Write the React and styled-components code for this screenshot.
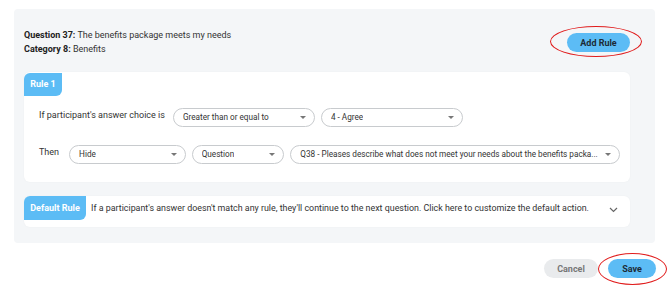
import React from 'react'
import styled, { createGlobalStyle } from 'styled-components'

const GlobalStyle = createGlobalStyle`
  body {
    margin: 0;
    background: #ffffff;
    font-family: Roboto, "Liberation Sans", sans-serif;
    color: #333;
  }
`

const Page = styled.div`
  width: 670px;
  height: 286px;
  padding-top: 9px;
  box-sizing: border-box;
  overflow: hidden;
`

const Panel = styled.section`
  margin-left: 14px;
  width: 641px;
  height: 234px;
  box-sizing: border-box;
  background: #f4f6f8;
  border-radius: 4px;
  padding: 19px 25px 0 10px;
`

const Header = styled.div`
  display: flex;
  justify-content: space-between;
  align-items: flex-start;
  height: 28px;
`

const QuestionInfo = styled.div`
  font-size: 9px;
  line-height: 14px;
  color: #333;
  b {
    font-weight: 700;
    color: #222;
  }
`

const Circled = styled.div`
  position: relative;
  display: inline-flex;
  margin-top: ${p => p.$mt || 0}px;
  &::after {
    content: '';
    position: absolute;
    left: ${p => p.$l}px;
    right: ${p => p.$r}px;
    top: ${p => p.$t}px;
    bottom: ${p => p.$b}px;
    border: 1.6px solid #e01b1b;
    border-radius: 50%;
    pointer-events: none;
  }
`

const PillButton = styled.button`
  height: 19px;
  width: ${p => p.$w}px;
  border: none;
  border-radius: 10px;
  background: ${p => (p.$muted ? '#e9ebed' : '#5cbcf5')};
  color: ${p => (p.$muted ? '#777' : '#1d2b36')};
  font-family: Roboto, "Liberation Sans", sans-serif;
  font-weight: 700;
  font-size: 9px;
  padding: 0;
  cursor: pointer;
`

const Card = styled.div`
  background: #fff;
  border-radius: 6px;
  box-shadow: 0 0 2px rgba(0, 0, 0, 0.04);
  margin-top: ${p => p.$mt}px;
`

const Tag = styled.div`
  display: inline-flex;
  align-items: center;
  justify-content: center;
  height: ${p => p.$h}px;
  width: ${p => p.$w}px;
  background: #5cbcf5;
  color: #fff;
  font-weight: 700;
  font-size: 9px;
  border-radius: 6px 0 6px 0;
  flex-shrink: 0;
`

const RuleBody = styled.div`
  padding: 12px 10px 18px 15px;
  display: flex;
  flex-direction: column;
  gap: 18px;
`

const Row = styled.div`
  display: flex;
  align-items: center;
  gap: 6px;
`

const Label = styled.span`
  font-size: 9px;
  color: #333;
  margin-right: ${p => p.$mr}px;
  margin-bottom: 4px;
  white-space: nowrap;
`

const Select = styled.div`
  display: flex;
  align-items: center;
  justify-content: space-between;
  box-sizing: border-box;
  width: ${p => p.$w}px;
  height: 19px;
  border: 1px solid #c8cbce;
  border-radius: 10px;
  padding: 0 8px 0 9px;
  font-size: 8.2px;
  color: #333;
  background: #fff;
  white-space: nowrap;
`

const SelectText = styled.span`
  overflow: hidden;
`

const Caret = styled.span`
  width: 0;
  height: 0;
  border-left: 3px solid transparent;
  border-right: 3px solid transparent;
  border-top: 3px solid #777;
  margin-left: 6px;
  flex-shrink: 0;
`

const DefaultCard = styled(Card)`
  display: flex;
  align-items: flex-start;
  height: 31px;
`

const DefaultText = styled.div`
  flex: 1;
  font-size: 8.9px;
  color: #333;
  line-height: 24px;
  padding-left: 5px;
  white-space: nowrap;
`

const Chevron = styled.svg`
  margin: 11px 12px 0 0;
`

const Footer = styled.div`
  display: flex;
  justify-content: flex-end;
  align-items: center;
  gap: 10px;
  margin-top: 16px;
  padding-right: 14px;
`

const Dropdown = ({ w, children }) => (
  <Select $w={w}>
    <SelectText>{children}</SelectText>
    <Caret />
  </Select>
)

export default function App() {
  return (
    <Page>
      <GlobalStyle />
      <Panel>
        <Header>
          <QuestionInfo>
            <div><b>Question 37:</b> The benefits package meets my needs</div>
            <div><b>Category 8:</b> Benefits</div>
          </QuestionInfo>
          <Circled $l={-17} $r={-12} $t={-7} $b={-5} $mt={5}>
            <PillButton $w={63}>Add Rule</PillButton>
          </Circled>
        </Header>

        <Card $mt={16}>
          <Tag $w={38} $h={23}>Rule 1</Tag>
          <RuleBody>
            <Row>
              <Label $mr={2}>If participant's answer choice is</Label>
              <Dropdown w={142}>Greater than or equal to</Dropdown>
              <Dropdown w={142}>4 - Agree</Dropdown>
            </Row>
            <Row>
              <Label $mr={4}>Then</Label>
              <Dropdown w={117}>Hide</Dropdown>
              <Dropdown w={93}>Question</Dropdown>
              <Dropdown w={331}>Q38 - Pleases describe what does not meet your needs about the benefits packa...</Dropdown>
            </Row>
          </RuleBody>
        </Card>

        <DefaultCard $mt={14}>
          <Tag $w={62} $h={24}>Default Rule</Tag>
          <DefaultText>
            If a participant's answer doesn't match any rule, they'll continue to the next question. Click here to customize the default action.
          </DefaultText>
          <Chevron width="9" height="6" viewBox="0 0 9 6">
            <path d="M1 1l3.5 3.5L8 1" fill="none" stroke="#666" strokeWidth="1.2" />
          </Chevron>
        </DefaultCard>
      </Panel>

      <Footer>
        <PillButton $w={54} $muted>Cancel</PillButton>
        <Circled $l={-10} $r={-11} $t={-6} $b={-7}>
          <PillButton $w={48}>Save</PillButton>
        </Circled>
      </Footer>
    </Page>
  )
}
